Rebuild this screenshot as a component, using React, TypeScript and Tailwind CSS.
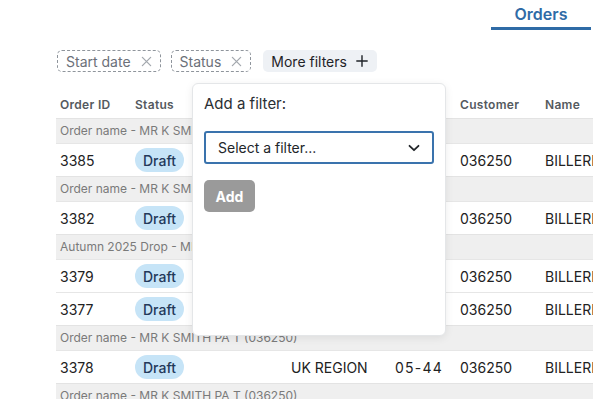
import React from 'react';

type Row =
  | { kind: 'group'; label: string }
  | { kind: 'order'; id: string; status: string; region: string; code: string; customer: string; name: string };

const rows: Row[] = [
  { kind: 'group', label: 'Order name - MR K SMITH PA T (036250)' },
  { kind: 'order', id: '3385', status: 'Draft', region: 'UK REGION', code: '05-44', customer: '036250', name: 'BILLERICAY' },
  { kind: 'group', label: 'Order name - MR K SMITH PA T (036250)' },
  { kind: 'order', id: '3382', status: 'Draft', region: 'UK REGION', code: '05-44', customer: '036250', name: 'BILLERICAY' },
  { kind: 'group', label: 'Autumn 2025 Drop - MR K SMITH PA T (036250)' },
  { kind: 'order', id: '3379', status: 'Draft', region: 'UK REGION', code: '05-44', customer: '036250', name: 'BILLERICAY' },
  { kind: 'order', id: '3377', status: 'Draft', region: 'UK REGION', code: '05-44', customer: '036250', name: 'BILLERICAY' },
  { kind: 'group', label: 'Order name - MR K SMITH PA T (036250)' },
  { kind: 'order', id: '3378', status: 'Draft', region: 'UK REGION', code: '05-44', customer: '036250', name: 'BILLERICAY' },
  { kind: 'group', label: 'Order name - MR K SMITH PA T (036250)' },
];

const cols = 'grid grid-cols-[75px_156px_104px_65px_85px_200px]';

function CloseIcon() {
  return (
    <svg width="11" height="11" viewBox="0 0 12 12" fill="none" stroke="#a3a8ae" strokeWidth="1.4" strokeLinecap="round">
      <path d="M1.5 1.5l9 9M10.5 1.5l-9 9" />
    </svg>
  );
}

function FilterChip({ label }: { label: string }) {
  return (
    <div className="h-[22px] flex items-center gap-[10px] pl-[8px] pr-[8px] border border-dashed border-[#8f959c] rounded-[5px] text-[14px] text-[#6b7079]">
      <span>{label}</span>
      <CloseIcon />
    </div>
  );
}

export default function App() {
  return (
    <div className="w-[593px] h-[399px] overflow-hidden relative bg-white font-['Inter',sans-serif]">
      {/* Tabs */}
      <div className="flex justify-end pr-[2px]">
        <div className="w-[100px] h-[30px] pt-[3px] border-b-[3px] border-[#2f6ba6] text-center text-[16px] leading-[22px] font-semibold text-[#2f6ba6]">
          Orders
        </div>
      </div>

      {/* Filter chips */}
      <div className="mt-[20px] ml-[57px] flex items-center gap-[10px]">
        <FilterChip label="Start date" />
        <FilterChip label="Status" />
        <button className="ml-[2px] h-[22px] flex items-center gap-[9px] pl-[8px] pr-[9px] rounded-[5px] bg-[#eef1f5] text-[14px] text-[#1f2328]">
          <span>More filters</span>
          <svg width="12" height="12" viewBox="0 0 12 12" fill="none" stroke="#1f2328" strokeWidth="1.4" strokeLinecap="round">
            <path d="M6 0.8v10.4M0.8 6h10.4" />
          </svg>
        </button>
      </div>

      {/* Table */}
      <div className="mt-[20px] ml-[56px] w-[700px]">
        <div className={`${cols} h-[26px] items-center text-[12px] font-semibold text-[#555a60] tracking-[0.3px]`}>
          <div className="pl-[4px]">Order ID</div>
          <div className="pl-[4px]">Status</div>
          <div className="pl-[4px]">Region</div>
          <div className="pl-[4px]">Code</div>
          <div className="pl-[4px]">Customer</div>
          <div className="pl-[4px]">Name</div>
        </div>
        {rows.map((r, i) =>
          r.kind === 'group' ? (
            <div
              key={i}
              className="h-[25px] flex items-center pl-[4px] bg-[#efefef] border-t border-[#e3e3e3] text-[12px] text-[#7a7a7a] whitespace-nowrap"
            >
              {r.label}
            </div>
          ) : (
            <div key={i} className={`${cols} h-[33px] items-center border-t border-[#e6e6e6] text-[14px] text-[#222]`}>
              <div className="pl-[4px]">{r.id}</div>
              <div className="pl-[4px]">
                <span className="inline-flex items-center h-[24px] px-[8px] rounded-full bg-[#c6e4f7] text-[#23395a] font-medium">
                  {r.status}
                </span>
              </div>
              <div className="pl-[4px]">{r.region}</div>
              <div className="pl-[4px] tracking-[1.2px]">{r.code}</div>
              <div className="pl-[4px]">{r.customer}</div>
              <div className="pl-[4px]">{r.name}</div>
            </div>
          )
        )}
      </div>

      {/* Add filter popover */}
      <div className="absolute left-[192px] top-[83px] w-[254px] h-[253px] bg-white border border-[#e4e6e8] rounded-[6px] shadow-[0_2px_8px_rgba(0,0,0,0.08)] px-[11px] pt-[9px]">
        <div className="text-[15px] leading-[22px] text-[#2b2f33]">Add a filter:</div>
        <div className="mt-[16px] h-[33px] flex items-center justify-between pl-[12px] pr-[12px] border-2 border-[#3a73ad] rounded-[3px] text-[14px] text-[#22262a]">
          <span>Select a filter...</span>
          <svg width="12" height="8" viewBox="0 0 12 8" fill="none" stroke="#22262a" strokeWidth="1.8" strokeLinecap="round" strokeLinejoin="round">
            <path d="M1.5 1.8L6 6.2l4.5-4.4" />
          </svg>
        </div>
        <button className="mt-[16px] w-[51px] h-[32px] rounded-[5px] bg-[#9a9a9a] text-white text-[14px] font-bold">
          Add
        </button>
      </div>
    </div>
  );
}
